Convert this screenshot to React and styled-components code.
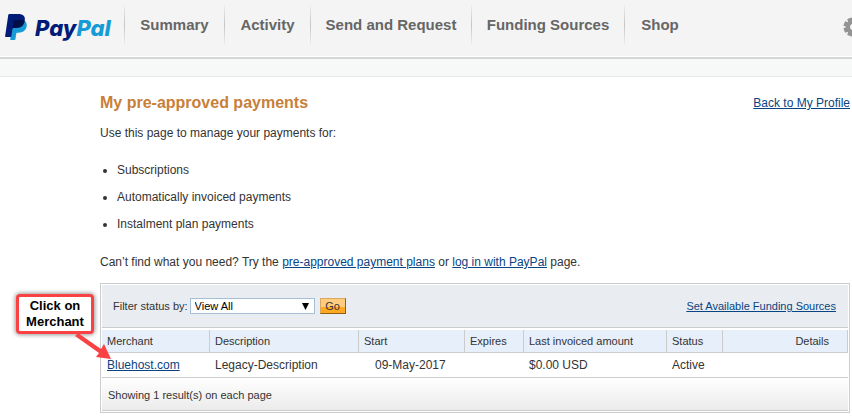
import { useState } from 'react';
import styled, { createGlobalStyle } from 'styled-components';

const FONT = '"Liberation Sans", Arial, sans-serif';

const COLOR = {
  TEXT: '#333333',
  LINK: '#084482',
  TITLE: '#c88039',
  NAV: '#666666',
  BORDER: '#cccccc',
  CALLOUT: '#fa4245',
};

const menus = [
  { name: 'Summary', width: 100 },
  { name: 'Activity', width: 86 },
  { name: 'Send and Request', width: 161 },
  { name: 'Funding Sources', width: 153 },
  { name: 'Shop', width: 71 },
];

const usages = [
  'Subscriptions',
  'Automatically invoiced payments',
  'Instalment plan payments',
];

const columns = [
  { name: 'Merchant', width: 108 },
  { name: 'Description', width: 149 },
  { name: 'Start', width: 106 },
  { name: 'Expires', width: 59 },
  { name: 'Last invoiced amount', width: 143 },
  { name: 'Status', width: 56 },
  { name: 'Details' },
];

const payments = [
  {
    merchant: 'Bluehost.com',
    description: 'Legacy-Description',
    start: '09-May-2017',
    expires: '',
    amount: '$0.00 USD',
    status: 'Active',
  },
];

const Logo = () => (
  <LogoLink href="#" aria-label="PayPal">
    <svg width="22" height="26" viewBox="0 0 22 26">
      <path
        fill="#179bd7"
        d="M19.6 7c1.9 1.3 2.5 3.2 2 5.6-.9 4.2-3.9 6.2-8.2 6.2h-1.200c-.5 0-.8.3-.9.8l-.9 5.6c-.1.5-.4.8-.9.8H5.7c-.4 0-.6-.3-.5-.7L7 14z"
      />
      <path
        fill="#001c78"
        d="M3.3.8C3.4.3 3.8 0 4.3 0h8.4c2.9 0 5 .6 6.2 2 1 1.2 1.2 2.7.8 4.8-.9 4.900-4 7.200-9 7.200H8.500c-.6 0-.9.3-1 .9l-1.200 7.400c-.1.400-.4.700-.8.700H.6c-.4 0-.6-.3-.5-.7z"
      />
      <path
        fill="#001046"
        d="M19.7 6.800c-.9 4.900-4 7.200-9 7.200H8.500c-.6 0-.9.3-1 .9L8.700 7c.1-.6.5-.9 1-.9h6.500c1.400 0 2.600.2 3.500.7z"
      />
    </svg>
    <LogoText>
      Pay<LogoAccent>Pal</LogoAccent>
    </LogoText>
  </LogoLink>
);

const Gear = () => (
  <svg width="20" height="20" viewBox="0 0 20 20">
    <g fill="#939393">
      {[22.5, 67.5, 112.5, 157.5].map(angle => (
        <rect
          key={angle}
          x="7.5"
          y="0.5"
          width="5"
          height="19"
          rx="1"
          transform={`rotate(${angle} 10 10)`}
        />
      ))}
      <circle cx="10" cy="10" r="7" />
    </g>
    <circle cx="10" cy="10" r="3" fill="#f4f4f4" />
  </svg>
);

const App = () => {
  const [status, setStatus] = useState('all');

  return (
    <Page>
      <GlobalStyle />
      <Header>
        <Logo />
        <Nav>
          {menus.map(menu => (
            <NavItem href="#" key={menu.name} $width={menu.width}>
              {menu.name}
            </NavItem>
          ))}
        </Nav>
        <SettingBtn type="button" aria-label="Settings">
          <Gear />
        </SettingBtn>
      </Header>
      <SubBar />
      <Main>
        <TitleRow>
          <Title>My pre-approved payments</Title>
          <Link href="#">Back to My Profile</Link>
        </TitleRow>
        <Text>Use this page to manage your payments for:</Text>
        <UsageList>
          {usages.map(usage => (
            <li key={usage}>{usage}</li>
          ))}
        </UsageList>
        <Text>
          Can’t find what you need? Try the{' '}
          <Link href="#">pre-approved payment plans</Link> or{' '}
          <Link href="#">log in with PayPal</Link> page.
        </Text>
        <Panel>
          <FilterBar>
            <label htmlFor="status">Filter status by:</label>
            <SelectBox>
              <Select
                id="status"
                value={status}
                onChange={e => setStatus(e.target.value)}
              >
                <option value="all">View All</option>
                <option value="active">Active</option>
              </Select>
              <Arrow width="7" height="7" viewBox="0 0 7 7">
                <path d="M0 0h7L3.5 7z" />
              </Arrow>
            </SelectBox>
            <GoBtn type="button">Go</GoBtn>
            <FundingLink href="#">Set Available Funding Sources</FundingLink>
          </FilterBar>
          <Table>
            <thead>
              <tr>
                {columns.map(column => (
                  <Th key={column.name} $width={column.width}>
                    {column.name}
                  </Th>
                ))}
              </tr>
            </thead>
            <tbody>
              {payments.map(payment => (
                <tr key={payment.merchant}>
                  <Td>
                    <Merchant>
                      <Link href="#">{payment.merchant}</Link>
                      <Callout>
                        Click on
                        <br />
                        Merchant
                      </Callout>
                      <Pointer width="38" height="30" viewBox="0 0 38 30">
                        <path d="M0 3L3 0L26 16L29 11L36 26L21 24L24 20z" />
                      </Pointer>
                    </Merchant>
                  </Td>
                  <Td>{payment.description}</Td>
                  <Td $indent>{payment.start}</Td>
                  <Td>{payment.expires}</Td>
                  <Td>{payment.amount}</Td>
                  <Td>{payment.status}</Td>
                  <Td />
                </tr>
              ))}
            </tbody>
          </Table>
          <PanelFooter>Showing 1 result(s) on each page</PanelFooter>
        </Panel>
      </Main>
    </Page>
  );
};

export default App;

const GlobalStyle = createGlobalStyle`
  * {
    box-sizing: border-box;
  }
  body {
    margin: 0;
    background: #ffffff;
    color: ${COLOR.TEXT};
    font-family: ${FONT};
    font-size: 12px;
    line-height: 16px;
  }
`;

const Page = styled.div`
  width: 100%;
  overflow: hidden;
`;
const Header = styled.header`
  display: flex;
  align-items: flex-start;
  height: 59px;
  border-bottom: 2px solid #d4d6d4;
  background: #f4f4f4;
  box-shadow: inset 0 -1px 0 #ffffff;
`;
const LogoLink = styled.a`
  display: flex;
  flex-shrink: 0;
  gap: 8px;
  width: 124px;
  padding: 14px 0 0 5px;
  text-decoration: none;
`;
const LogoText = styled.span`
  color: #001c78;
  font-family: Inter, ${FONT};
  font-size: 22px;
  font-style: italic;
  font-weight: 800;
  line-height: 28px;
`;
const LogoAccent = styled.span`
  color: #179bd7;
`;
const Nav = styled.nav`
  display: flex;
  padding-top: 5px;
`;
const NavItem = styled.a`
  flex-shrink: 0;
  width: ${({ $width }) => $width}px;
  height: 40px;
  border-left: 1px solid;
  border-image: linear-gradient(#f0f0f0, #c4c4c4 50%, #f0f0f0) 1;
  color: ${COLOR.NAV};
  font-size: 15px;
  font-weight: bold;
  line-height: 40px;
  text-align: center;
  text-decoration: none;
  white-space: nowrap;
`;
const SettingBtn = styled.button`
  flex-shrink: 0;
  height: 20px;
  margin: 17px -11px 0 auto;
  padding: 0;
  border: 0;
  background: none;
`;
const SubBar = styled.div`
  height: 18px;
  border-bottom: 1px solid #e5ebea;
  background: #f7f9f9;
`;
const Main = styled.main`
  padding: 16px 2px 6px 100px;
`;
const TitleRow = styled.div`
  display: flex;
  justify-content: space-between;
  align-items: center;
  margin-bottom: 12px;
`;
const Title = styled.h1`
  margin: 0;
  color: ${COLOR.TITLE};
  font-size: 16px;
  line-height: 20px;
`;
const Text = styled.p`
  margin: 0;
`;
const Link = styled.a`
  color: ${COLOR.LINK};
  text-decoration: underline;
`;
const UsageList = styled.ul`
  display: flex;
  flex-direction: column;
  gap: 11px;
  margin: 21px 0 22px;
  padding-left: 17px;
`;
const Panel = styled.section`
  margin-top: 13px;
  padding: 1px;
  border: 1px solid ${COLOR.BORDER};
`;
const FilterBar = styled.div`
  display: flex;
  align-items: center;
  height: 43px;
  padding: 0 12px 0 11px;
  border-bottom: 1px solid ${COLOR.BORDER};
  background: #e9edf1;
  font-size: 11px;
`;
const SelectBox = styled.div`
  position: relative;
  margin: 0 5px 0 2px;
`;
const Select = styled.select`
  display: block;
  width: 125px;
  height: 16px;
  padding: 0 4px;
  border: 1px solid #a6bfd9;
  border-radius: 0;
  appearance: none;
  background: #ffffff;
  color: #000000;
  font-family: ${FONT};
  font-size: 11px;
`;
const Arrow = styled.svg`
  position: absolute;
  top: 5px;
  right: 6px;
  pointer-events: none;
`;
const GoBtn = styled.button`
  width: 26px;
  height: 16px;
  padding: 0;
  border: 1px solid;
  border-color: #d9a762 #935e0d #935e0d #d9a762;
  background: linear-gradient(#ffcd7d 60%, #ffa822 60%);
  color: #333333;
  font-family: ${FONT};
  font-size: 11px;
  line-height: 14px;
`;
const FundingLink = styled(Link)`
  margin-left: auto;
`;
const Table = styled.table`
  width: 100%;
  margin-top: 2px;
  border-spacing: 0;
  table-layout: fixed;
`;
const Th = styled.th`
  width: ${({ $width }) => ($width ? `${$width}px` : 'auto')};
  height: 23px;
  padding: 0 5px;
  border-right: 1px solid ${COLOR.BORDER};
  border-bottom: 1px solid ${COLOR.BORDER};
  background: #e6effa;
  font-size: 11px;
  font-weight: normal;
  text-align: left;
  white-space: nowrap;

  &:last-child {
    padding-right: 18px;
    text-align: right;
  }
`;
const Td = styled.td`
  height: 25px;
  padding: 0 5px 0 ${({ $indent }) => ($indent ? 16 : 5)}px;
  border-bottom: 1px solid ${COLOR.BORDER};
  white-space: nowrap;
`;
const Merchant = styled.div`
  position: relative;
`;
// The hint and its arrow lie over the table and point at the merchant link
const Callout = styled.div`
  position: absolute;
  top: -63px;
  left: -91px;
  width: 78px;
  padding: 1px 0;
  border: 3px solid ${COLOR.CALLOUT};
  border-radius: 4px;
  background: #ffffff;
  box-shadow: 0 0 4px 1px rgba(0, 0, 0, 0.4);
  color: #000000;
  font-size: 13px;
  font-weight: bold;
  line-height: 16px;
  text-align: center;
`;
const Pointer = styled.svg`
  position: absolute;
  top: -24px;
  left: -32px;
  fill: ${COLOR.CALLOUT};
`;
const PanelFooter = styled.div`
  height: 33px;
  padding-left: 6px;
  border-bottom: 1px solid ${COLOR.BORDER};
  background: linear-gradient(#ffffff, #ebebeb);
  font-size: 11px;
  line-height: 34px;
`;
